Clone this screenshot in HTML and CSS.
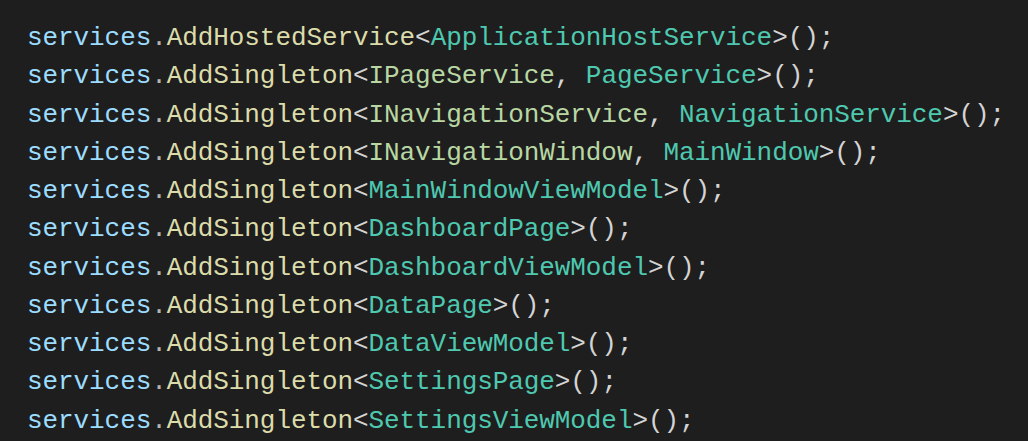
FILE: index.html
```html
<!DOCTYPE html>
<html>
<head>
	<title>Services</title>
	<link rel="stylesheet" href="styles.css">
</head>
<body>
	<pre class="code"><div class="line"><span class="var">services</span><span class="op">.</span><span class="fn">AddHostedService</span><span class="pn">&lt;</span><span class="cls">ApplicationHostService</span><span class="pn">&gt;();</span></div><div class="line"><span class="var">services</span><span class="op">.</span><span class="fn">AddSingleton</span><span class="pn">&lt;</span><span class="ifc">IPageService</span><span class="pn">, </span><span class="cls">PageService</span><span class="pn">&gt;();</span></div><div class="line"><span class="var">services</span><span class="op">.</span><span class="fn">AddSingleton</span><span class="pn">&lt;</span><span class="ifc">INavigationService</span><span class="pn">, </span><span class="cls">NavigationService</span><span class="pn">&gt;();</span></div><div class="line"><span class="var">services</span><span class="op">.</span><span class="fn">AddSingleton</span><span class="pn">&lt;</span><span class="ifc">INavigationWindow</span><span class="pn">, </span><span class="cls">MainWindow</span><span class="pn">&gt;();</span></div><div class="line"><span class="var">services</span><span class="op">.</span><span class="fn">AddSingleton</span><span class="pn">&lt;</span><span class="cls">MainWindowViewModel</span><span class="pn">&gt;();</span></div><div class="line"><span class="var">services</span><span class="op">.</span><span class="fn">AddSingleton</span><span class="pn">&lt;</span><span class="cls">DashboardPage</span><span class="pn">&gt;();</span></div><div class="line"><span class="var">services</span><span class="op">.</span><span class="fn">AddSingleton</span><span class="pn">&lt;</span><span class="cls">DashboardViewModel</span><span class="pn">&gt;();</span></div><div class="line"><span class="var">services</span><span class="op">.</span><span class="fn">AddSingleton</span><span class="pn">&lt;</span><span class="cls">DataPage</span><span class="pn">&gt;();</span></div><div class="line"><span class="var">services</span><span class="op">.</span><span class="fn">AddSingleton</span><span class="pn">&lt;</span><span class="cls">DataViewModel</span><span class="pn">&gt;();</span></div><div class="line"><span class="var">services</span><span class="op">.</span><span class="fn">AddSingleton</span><span class="pn">&lt;</span><span class="cls">SettingsPage</span><span class="pn">&gt;();</span></div><div class="line"><span class="var">services</span><span class="op">.</span><span class="fn">AddSingleton</span><span class="pn">&lt;</span><span class="cls">SettingsViewModel</span><span class="pn">&gt;();</span></div></pre>
</body>
</html>
```
FILE: styles.css
```css
html, body {
	background-color: #1e1e1e;
	margin: 0;
	padding: 0;
	height: 100%;
	overflow: hidden;
}
.code {
	margin: 0;
	padding: 19px 0 0 27px;
	font-family: "Liberation Mono", monospace;
	font-size: 26px;
	line-height: 38.27px;
	letter-spacing: -0.08px;
	color: #d4d4d4;
}
.line {
	white-space: pre;
}
.var {
	color: #9cdcfe;
}
.op {
	color: #b4b4b4;
}
.fn {
	color: #dcdcaa;
}
.cls {
	color: #4ec9b0;
}
.ifc {
	color: #b8d7a3;
}
.pn {
	color: #d4d4d4;
}
```
